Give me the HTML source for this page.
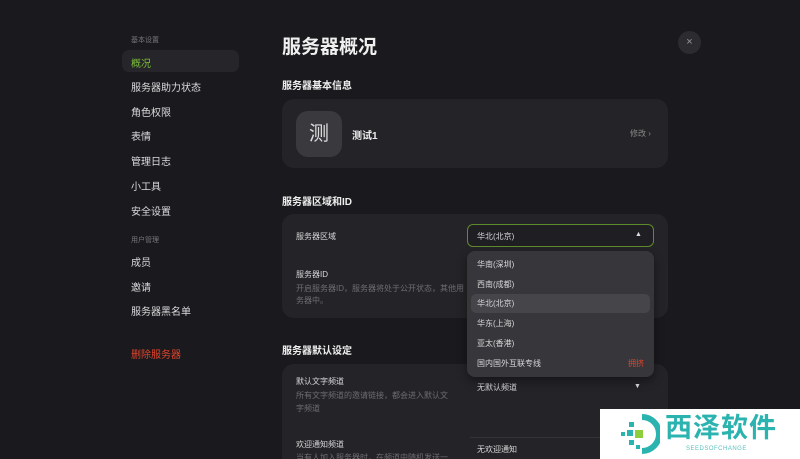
<!DOCTYPE html>
<html><head><meta charset="utf-8"><style>
*{margin:0;padding:0;box-sizing:border-box}
html,body{width:800px;height:459px;overflow:hidden}
body{background:#1a1a1e;font-family:"Liberation Sans","Noto Sans CJK SC",sans-serif;color:#e6e6e8;position:relative}
.a{position:absolute;white-space:nowrap}
.s{font-size:10px;color:#dcdcde}
.sm{font-size:7px;color:#77777c}
.card{position:absolute;background:#242428;border-radius:12px}
.h{font-size:10px;font-weight:bold;color:#eee}
.d{font-size:8px;color:#6c6c72}
.it{font-size:8px;color:#d8d8da}
.dd{z-index:5}
</style></head><body>
<div class="a sm" style="left:131px;top:35px">基本设置</div>
<div class="a" style="left:122px;top:50px;width:117px;height:22px;background:#25252a;border-radius:7px"></div>
<div class="a s" style="left:131px;top:55px;color:#7cbf3a">概况</div>
<div class="a s" style="left:131px;top:79px">服务器助力状态</div>
<div class="a s" style="left:131px;top:104px">角色权限</div>
<div class="a s" style="left:131px;top:128px">表情</div>
<div class="a s" style="left:131px;top:153px">管理日志</div>
<div class="a s" style="left:131px;top:178px">小工具</div>
<div class="a s" style="left:131px;top:203px">安全设置</div>
<div class="a sm" style="left:131px;top:235px">用户管理</div>
<div class="a s" style="left:131px;top:254px">成员</div>
<div class="a s" style="left:131px;top:279px">邀请</div>
<div class="a s" style="left:131px;top:303px">服务器黑名单</div>
<div class="a s" style="left:131px;top:346px;color:#e0452c">删除服务器</div>

<div class="a" style="left:282px;top:32px;font-size:19px;font-weight:bold;color:#f0f0f0">服务器概况</div>
<div class="a" style="left:678px;top:31px;width:23px;height:23px;border-radius:50%;background:#2c2c30;color:#999;font-size:11px;text-align:center;line-height:23px">×</div>

<div class="a h" style="left:282px;top:77px">服务器基本信息</div>
<div class="card" style="left:282px;top:99px;width:386px;height:69px"></div>
<div class="a" style="left:296px;top:111px;width:46px;height:46px;border-radius:12px;background:#3a3a3e;font-size:20px;text-align:center;line-height:46px;color:#ddd">测</div>
<div class="a h" style="left:352px;top:127px">测试1</div>
<div class="a d" style="left:630px;top:128px;color:#888">修改 ›</div>

<div class="a h" style="left:282px;top:193px">服务器区域和ID</div>
<div class="card" style="left:282px;top:214px;width:386px;height:104px"></div>
<div class="a it" style="left:296px;top:231px">服务器区域</div>
<div class="a" style="left:467px;top:224px;width:187px;height:23px;border:1.5px solid #5f8a2c;border-radius:6px;background:#1f1f23"></div>
<div class="a it" style="left:477px;top:231px">华北(北京)</div>
<div class="a" style="left:635px;top:231px;font-size:7px;color:#ddd">▲</div>
<div class="a it" style="left:296px;top:269px">服务器ID</div>
<div class="a d" style="left:296px;top:283px">开启服务器ID，服务器将处于公开状态，其他用</div>
<div class="a d" style="left:296px;top:295px">务器中。</div>

<div class="a h" style="left:282px;top:342px">服务器默认设定</div>
<div class="card" style="left:282px;top:364px;width:386px;height:110px"></div>
<div class="a it" style="left:296px;top:376px">默认文字频道</div>
<div class="a d" style="left:296px;top:390px">所有文字频道的邀请链接，都会进入默认文</div>
<div class="a d" style="left:296px;top:403px">字频道</div>
<div class="a it" style="left:477px;top:382px">无默认频道</div>
<div class="a" style="left:634px;top:383px;font-size:7px;color:#ddd">▼</div>
<div class="a" style="left:470px;top:437px;width:190px;height:1px;background:#333338"></div>
<div class="a it" style="left:296px;top:439px">欢迎通知频道</div>
<div class="a d" style="left:296px;top:452px">当有人加入服务器时，在频道中随机发送一</div>
<div class="a it" style="left:477px;top:444px">无欢迎通知</div>

<div class="a dd" style="left:467px;top:251px;width:187px;height:126px;background:#37373b;border-radius:8px;box-shadow:0 4px 10px rgba(0,0,0,.4)"></div>
<div class="a dd" style="left:471px;top:294px;width:179px;height:19px;background:#45454a;border-radius:5px"></div>
<div class="a it dd" style="left:477px;top:259px">华南(深圳)</div>
<div class="a it dd" style="left:477px;top:279px">西南(成都)</div>
<div class="a it dd" style="left:477px;top:298px">华北(北京)</div>
<div class="a it dd" style="left:477px;top:318px">华东(上海)</div>
<div class="a it dd" style="left:477px;top:338px">亚太(香港)</div>
<div class="a it dd" style="left:477px;top:358px">国内国外互联专线</div>
<div class="a dd" style="left:628px;top:358px;font-size:8px;color:#e0452c">拥挤</div>

<div class="a dd" style="left:600px;top:409px;width:200px;height:50px;background:#fff"></div>
<svg class="a dd" style="left:618px;top:413px" width="42" height="42" viewBox="0 0 42 42">
<path d="M24 4 A17 17 0 0 1 24 38" stroke="#2bb3b0" stroke-width="6" fill="none"/>
<rect x="17" y="17" width="8" height="8" fill="#8ccf3a"/><rect x="9" y="17" width="6" height="6" fill="#2bb3b0"/>
<rect x="3" y="19" width="4" height="4" fill="#2bb3b0"/><rect x="11" y="9" width="5" height="5" fill="#2bb3b0"/>
<rect x="11" y="27" width="5" height="5" fill="#2bb3b0"/><rect x="18" y="32" width="4" height="4" fill="#2bb3b0"/>
</svg>
<div class="a dd" style="left:665px;top:412px;font-size:27px;line-height:32px;font-weight:bold;color:#2bb3b0;letter-spacing:1px">西泽软件</div>
<div class="a dd" style="left:686px;top:445px;font-size:6px;line-height:8px;color:#5bbfc0;letter-spacing:.5px">SEEDSOFCHANGE</div>
</body></html>
